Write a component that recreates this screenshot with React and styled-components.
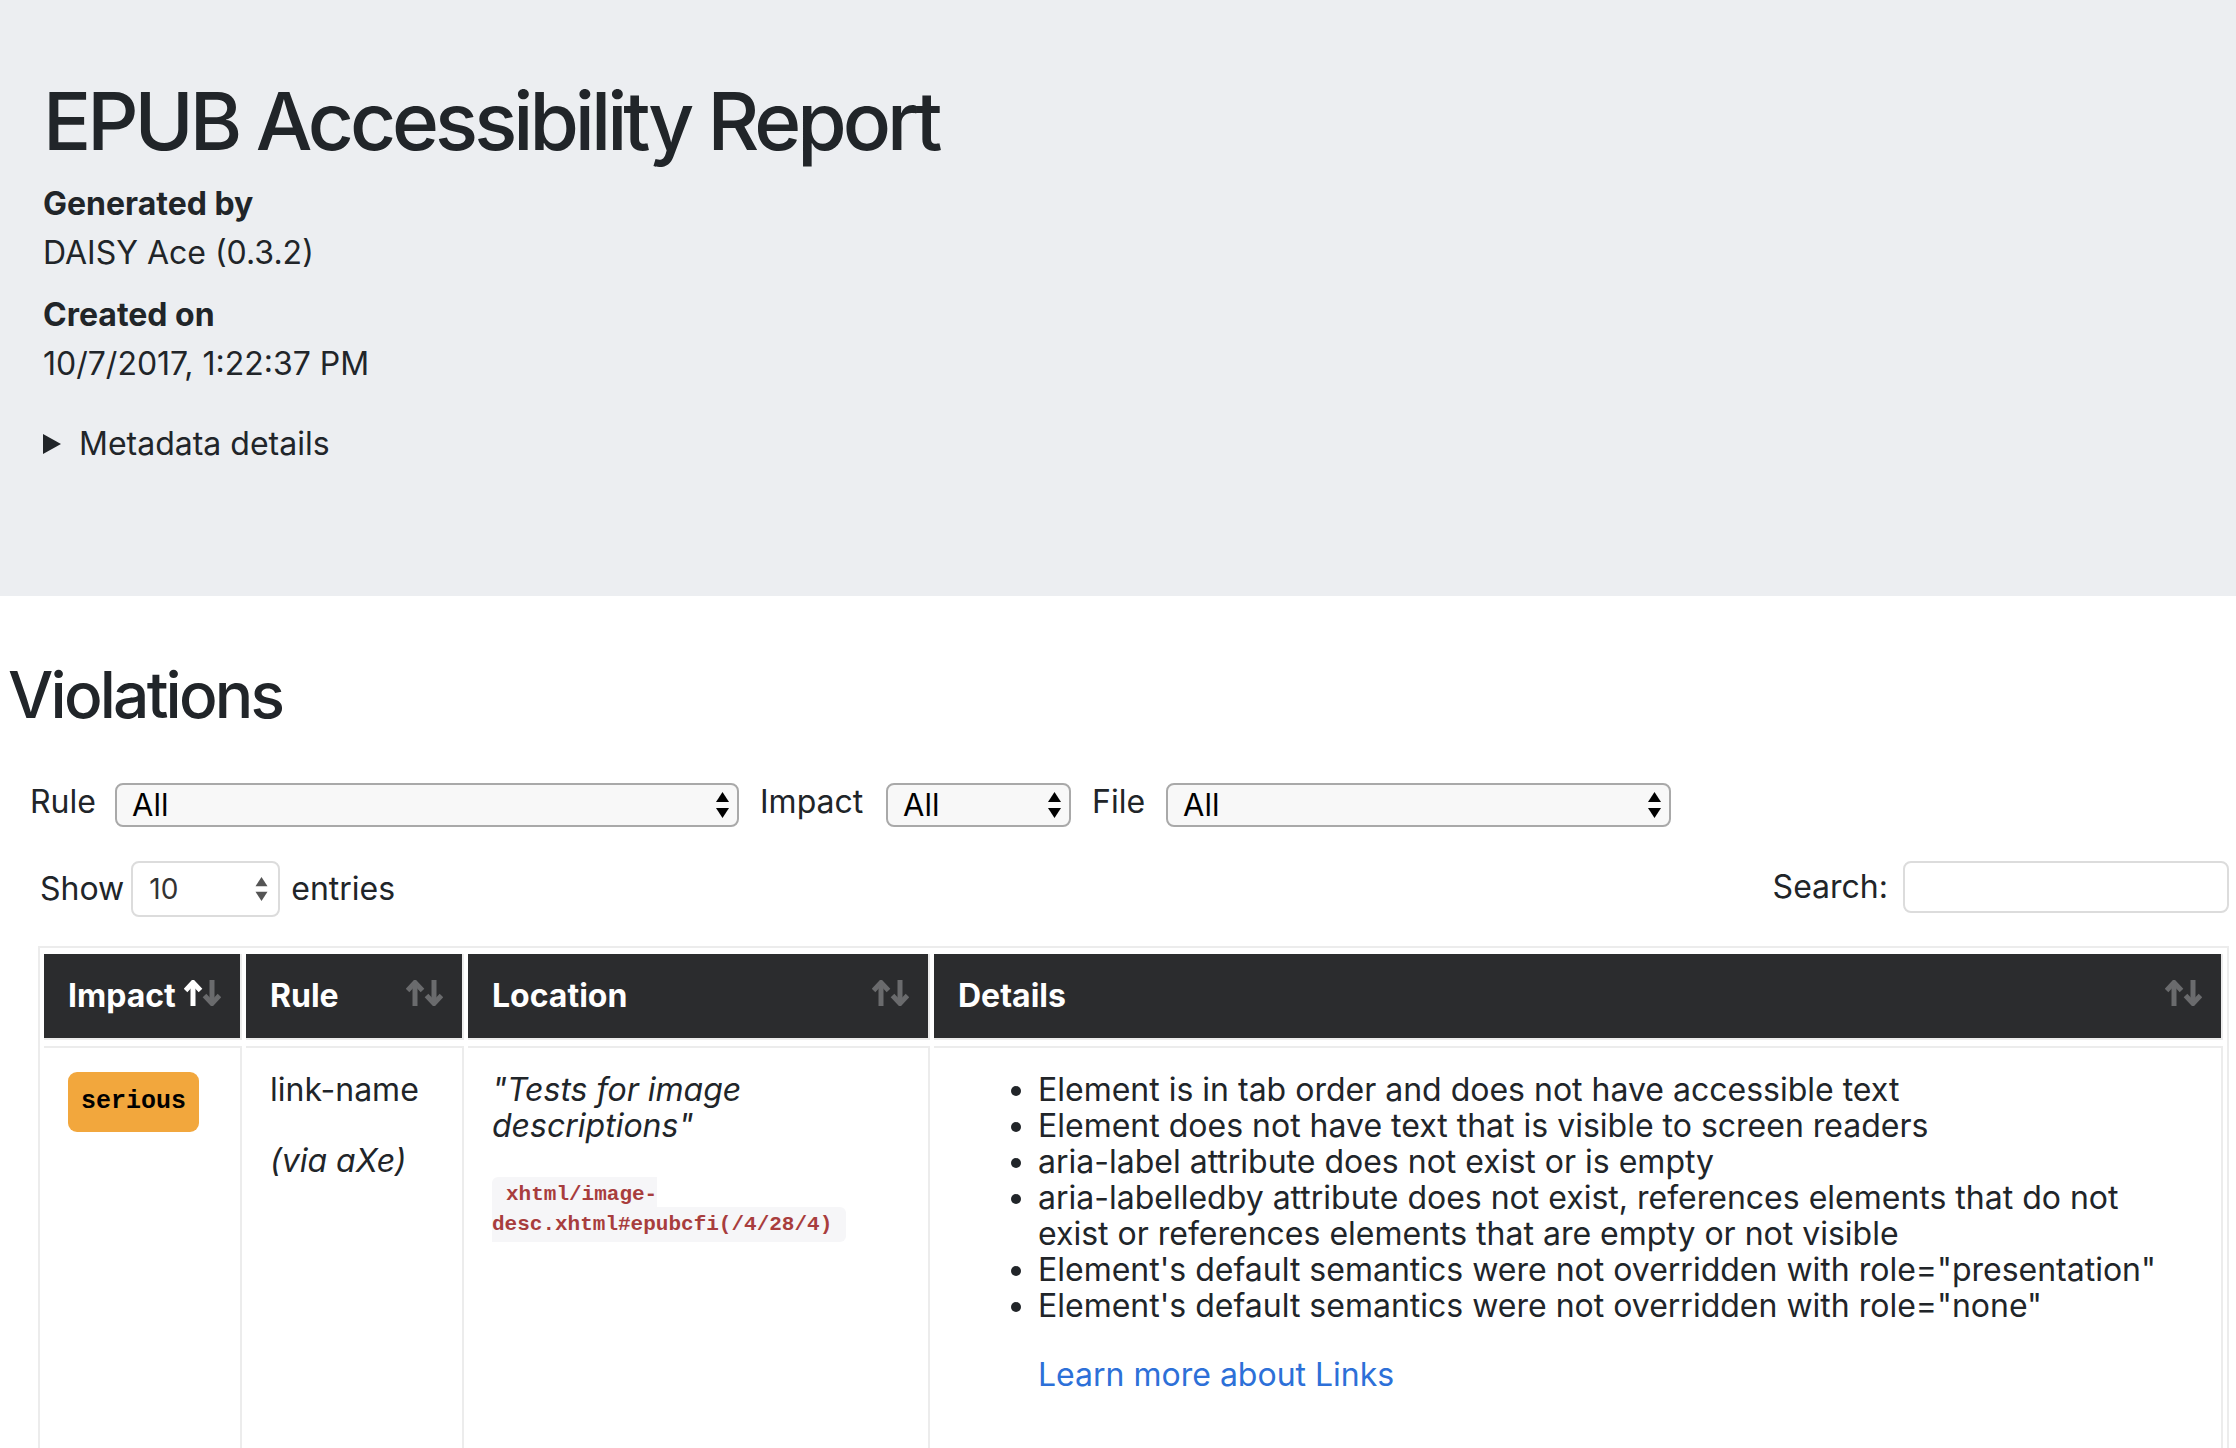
import React from 'react';
import styled, { createGlobalStyle } from 'styled-components';

const GlobalStyle = createGlobalStyle`
	*, *::before, *::after {
		box-sizing: border-box;
	}
	html, body {
		margin: 0;
		padding: 0;
		background: #fff;
	}
	body {
		font-family: Inter, 'Noto Sans', sans-serif;
		font-size: 32px;
		line-height: 48px;
		color: #212529;
	}
`;

const Jumbotron = styled.header`
	height: 596px;
	padding: 73px 43px 0;
	background-color: #eceef1;
`;

const Title = styled.h1`
	margin: 0;
	font-size: 80px;
	line-height: 96px;
	font-weight: 500;
	letter-spacing: -4px;
`;

const MetaList = styled.dl`
	margin: 0;
`;

const MetaTerm = styled.dt`
	margin-top: ${(props) => props.$gap}px;
	font-weight: 700;
`;

const MetaValue = styled.dd`
	margin: 1px 0 0;
`;

const Summary = styled.div`
	display: flex;
	align-items: center;
	gap: 18px;
	margin-top: 32px;
`;

const Section = styled.section`
	padding: 0 7px 0 8px;
`;

const SectionTitle = styled.h2`
	margin: 60px 0 0;
	font-size: 64px;
	line-height: 77px;
	font-weight: 500;
	letter-spacing: -2.8px;
`;

const FilterBar = styled.div`
	display: flex;
	align-items: center;
	height: 44px;
	margin-top: 50px;
	padding-left: 22px;
`;

const FilterLabel = styled.label`
	width: ${(props) => props.$w}px;
	margin-left: ${(props) => props.$ml || 0}px;
	margin-bottom: 6px;
	line-height: 36px;
	flex-shrink: 0;
`;

const SelectBox = styled.div`
	display: flex;
	align-items: center;
	justify-content: space-between;
	width: ${(props) => props.$w}px;
	height: 44px;
	padding: 0 8px 0 15px;
	background: #f8f8f8;
	border: 2px solid #a9a9a9;
	border-radius: 8px;
	color: #000;
	font-size: 31px;
	line-height: 40px;
	flex-shrink: 0;
`;

const Wrapper = styled.div`
	padding-left: 30px;
`;

const LengthRow = styled.div`
	display: flex;
	align-items: flex-start;
	justify-content: space-between;
	margin-top: 34px;
`;

const LengthLabel = styled.div`
	display: flex;
	align-items: center;
	height: 56px;
	padding-left: 2px;
	line-height: 36px;
`;

const LengthSelect = styled.div`
	display: flex;
	align-items: center;
	justify-content: space-between;
	width: 149px;
	height: 56px;
	margin: 0 11px 0 ${(props) => props.$ml}px;
	padding: 0 10px 0 16px;
	background: #fff;
	border: 2px solid #dcdcdc;
	border-radius: 8px;
	font-size: 28px;
	color: #333;
`;

const SearchBox = styled.div`
	display: flex;
	align-items: center;
	gap: 15px;
	height: 52px;
	line-height: 36px;
`;

const SearchInput = styled.div`
	width: 326px;
	height: 52px;
	border: 2px solid #dcdcdc;
	border-radius: 8px;
	background: #fff;
`;

const Table = styled.table`
	width: 100%;
	margin-top: 29px;
	table-layout: fixed;
	border-collapse: separate;
	border-spacing: 4px 6px;
	border: 2px solid #ececec;
`;

const HeadCell = styled.th`
	width: ${(props) => (props.$w ? `${props.$w}px` : 'auto')};
	padding: 24px 19px 24px 24px;
	background-color: #2b2c2e;
	color: #fff;
	font-size: 32px;
	line-height: 36px;
	font-weight: 700;
	text-align: left;
	border-right: 2px solid #ececec;
	border-bottom: 2px solid #ececec;
`;

const HeadInner = styled.div`
	display: flex;
	align-items: center;
	justify-content: space-between;
	white-space: nowrap;

	svg {
		flex-shrink: 0;
		margin-bottom: 6px;
	}
`;

const Cell = styled.td`
	height: 420px;
	padding: 24px;
	vertical-align: top;
	line-height: 36px;
	border-top: 2px solid #ececec;
	border-right: 2px solid #ececec;
`;

const Badge = styled.span`
	display: inline-flex;
	align-items: center;
	height: 60px;
	padding: 0 13px;
	background-color: #f2a73d;
	border-radius: 9px;
	color: #000;
	font-family: 'Liberation Mono', 'DejaVu Sans Mono', monospace;
	font-size: 25px;
	font-weight: 700;
`;

const Engine = styled.div`
	margin-top: 35px;
	font-style: italic;
`;

const Quote = styled.div`
	font-style: italic;
`;

const CodeLine = styled.p`
	margin: 36px 0 0;
	font-family: 'Liberation Mono', 'DejaVu Sans Mono', monospace;
	font-size: 21px;
	line-height: 30px;
`;

const Code = styled.code`
	padding: 6px 14px;
	background-color: #f6f6f8;
	border-radius: 6px;
	color: #a83d3d;
	font-family: inherit;
	font-size: 21px;
	font-weight: 700;
`;

const List = styled.ul`
	margin: 0;
	padding-left: 80px;
`;

const LearnMore = styled.p`
	margin: 33px 0 0;
	padding-left: 80px;

	a {
		color: #2d70d8;
		text-decoration: none;
	}
`;

const Triangles = ({ color = '#000', h = 26 }) => (
	<svg width="13" height={h} viewBox="0 0 13 26" fill={color}>
		<polygon points="0,10 6.5,0 13,10" />
		<polygon points="0,16 6.5,26 13,16" />
	</svg>
);

const SortArrows = ({ active }) => (
	<svg width="37" height="26" viewBox="0 0 37 26" fill="none" strokeWidth="5">
		<g stroke={active ? '#fff' : '#6a6b6d'}>
			<path d="M1.5 10.5 L9 2.5 L16.5 10.5" />
			<path d="M9 3 V26" />
		</g>
		<g stroke="#6a6b6d">
			<path d="M20.5 15.5 L28 23.5 L35.5 15.5" />
			<path d="M28 0 V23" />
		</g>
	</svg>
);

const Caret = () => (
	<svg width="18" height="20" viewBox="0 0 18 20" fill="#212529">
		<polygon points="0,0 18,10 0,20" />
	</svg>
);

const details = [
	'Element is in tab order and does not have accessible text',
	'Element does not have text that is visible to screen readers',
	'aria-label attribute does not exist or is empty',
	'aria-labelledby attribute does not exist, references elements that do not exist or references elements that are empty or not visible',
	'Element\'s default semantics were not overridden with role="presentation"',
	'Element\'s default semantics were not overridden with role="none"',
];

const App = () => {
	return (
		<>
			<GlobalStyle />
			<Jumbotron>
				<Title>EPUB Accessibility Report</Title>
				<MetaList>
					<MetaTerm $gap={11}>Generated by</MetaTerm>
					<MetaValue>DAISY Ace (0.3.2)</MetaValue>
					<MetaTerm $gap={14}>Created on</MetaTerm>
					<MetaValue>10/7/2017, 1:22:37 PM</MetaValue>
				</MetaList>
				<Summary>
					<Caret />
					<span>Metadata details</span>
				</Summary>
			</Jumbotron>

			<Section>
				<SectionTitle>Violations</SectionTitle>
				<FilterBar>
					<FilterLabel $w={85}>Rule</FilterLabel>
					<SelectBox $w={624}>
						<span>All</span>
						<Triangles />
					</SelectBox>
					<FilterLabel $w={126} $ml={21}>Impact</FilterLabel>
					<SelectBox $w={185}>
						<span>All</span>
						<Triangles />
					</SelectBox>
					<FilterLabel $w={74} $ml={21}>File</FilterLabel>
					<SelectBox $w={505}>
						<span>All</span>
						<Triangles />
					</SelectBox>
				</FilterBar>

				<Wrapper>
					<LengthRow>
						<LengthLabel>
							Show
							<LengthSelect $ml={7}>
								<span>10</span>
								<Triangles color="#555" h={24} />
							</LengthSelect>
							entries
						</LengthLabel>
						<SearchBox>
							<span>Search:</span>
							<SearchInput />
						</SearchBox>
					</LengthRow>

					<Table>
						<thead>
							<tr>
								<HeadCell $w={198}>
									<HeadInner>
										Impact
										<SortArrows active />
									</HeadInner>
								</HeadCell>
								<HeadCell $w={218}>
									<HeadInner>
										Rule
										<SortArrows />
									</HeadInner>
								</HeadCell>
								<HeadCell $w={462}>
									<HeadInner>
										Location
										<SortArrows />
									</HeadInner>
								</HeadCell>
								<HeadCell>
									<HeadInner>
										Details
										<SortArrows />
									</HeadInner>
								</HeadCell>
							</tr>
						</thead>
						<tbody>
							<tr>
								<Cell>
									<Badge>serious</Badge>
								</Cell>
								<Cell>
									<div>link-name</div>
									<Engine>(via aXe)</Engine>
								</Cell>
								<Cell>
									<Quote>"Tests for image descriptions"</Quote>
									<CodeLine>
										<Code>xhtml/image-desc.xhtml#epubcfi(/4/28/4)</Code>
									</CodeLine>
								</Cell>
								<Cell>
									<List>
										{details.map((text) => (
											<li key={text}>{text}</li>
										))}
									</List>
									<LearnMore>
										<a href="#links">Learn more about Links</a>
									</LearnMore>
								</Cell>
							</tr>
						</tbody>
					</Table>
				</Wrapper>
			</Section>
		</>
	);
};

export default App;
